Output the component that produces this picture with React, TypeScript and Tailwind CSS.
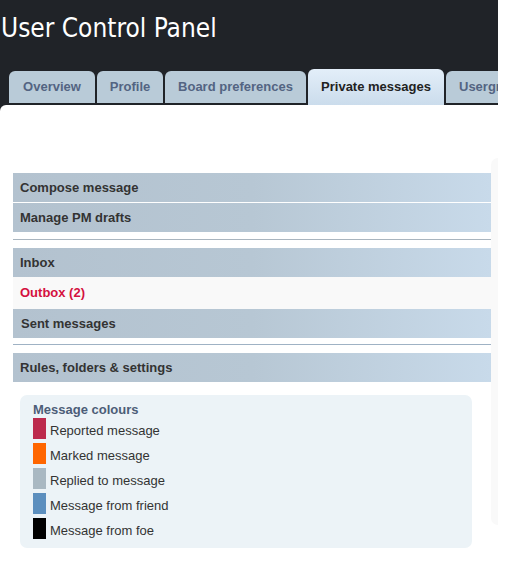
import React from 'react';

const tabs = [
  { label: 'Overview', width: 'w-[86px]' },
  { label: 'Profile', width: 'w-[66px]' },
  { label: 'Board preferences', width: 'w-[141px]' },
  { label: 'Private messages', width: 'w-[136px]', active: true },
];

const legend = [
  { label: 'Reported message', color: 'bg-[#bc2a4d]' },
  { label: 'Marked message', color: 'bg-[#ff6600]' },
  { label: 'Replied to message', color: 'bg-[#a9b8c2]' },
  { label: 'Message from friend', color: 'bg-[#5c8fbe]' },
  { label: 'Message from foe', color: 'bg-[#000000]' },
];

const MenuRow: React.FC<{ label: string }> = ({ label }) => (
  <div className="h-[29px] flex items-center pl-[7px] bg-gradient-to-r from-[#b3c2cf] via-[#b7c7d4] to-[#c8daea] text-[13px] font-bold text-[#333333]">
    {label}
  </div>
);

const App: React.FC = () => {
  return (
    <div className="min-h-[562px] bg-white font-['Liberation_Sans',Arial,sans-serif]">
      <div className="w-[498px] overflow-hidden bg-[#202328]">
        <h1 className="pt-[13px] pl-[1px] text-[26px] leading-[30px] font-normal text-white font-['DejaVu_Sans_Condensed','DejaVu_Sans',sans-serif]">
          User Control Panel
        </h1>

        <div className="mt-[26px] flex items-end gap-[2px] pl-[9px] h-[36px]">
          {tabs.map((tab) =>
            tab.active ? (
              <div
                key={tab.label}
                className={`${tab.width} shrink-0 h-[36px] rounded-t-[6px] bg-gradient-to-b from-[#e3eef9] to-[#cbdcec] flex items-center justify-center text-[13px] font-bold text-[#222222]`}
              >
                {tab.label}
              </div>
            ) : (
              <div
                key={tab.label}
                className={`${tab.width} shrink-0 h-[32px] mb-[2px] rounded-t-[6px] bg-[#b9cbd8] flex items-center justify-center text-[13px] font-bold text-[#536482] whitespace-nowrap`}
              >
                {tab.label}
              </div>
            )
          )}
          <div className="w-[110px] shrink-0 h-[32px] mb-[2px] rounded-t-[6px] bg-[#b9cbd8] flex items-center pl-[13px] text-[13px] font-bold text-[#536482] whitespace-nowrap">
            Usergroups
          </div>
        </div>

        <div className="bg-white rounded-tl-[6px] h-[457px] flex">
          <div className="ml-[13px] w-[478px] pt-[68px] flex flex-col">
            <div className="flex flex-col gap-[1px]">
              <MenuRow label="Compose message" />
              <MenuRow label="Manage PM drafts" />
            </div>
            <div className="mt-[7px] mb-[8px] h-[1px] bg-[#a9b5bf]" />

            <MenuRow label="Inbox" />
            <div className="h-[32px] flex items-center pl-[7px] bg-[#f9f9f9] text-[13px] font-bold text-[#d4113f]">
              Outbox (2)
            </div>
            <div className="h-[29px] flex items-center pl-[8px] bg-gradient-to-r from-[#b3c2cf] via-[#b7c7d4] to-[#c8daea] text-[13px] font-bold text-[#333333]">
              Sent messages
            </div>
            <div className="mt-[6px] mb-[8px] h-[1px] bg-[#9fb2c4]" />

            <MenuRow label="Rules, folders & settings" />

            <div className="mt-[13px] ml-[7px] w-[452px] h-[153px] rounded-[7px] bg-[#ecf3f7] pl-[13px] pt-[6px]">
              <div className="text-[13px] leading-[17px] font-bold text-[#4c5d77]">Message colours</div>
              <div className="flex flex-col gap-[4px]">
                {legend.map((item) => (
                  <div key={item.label} className="h-[21px] flex items-start gap-[4px]">
                    <span className={`w-[13px] h-[21px] ${item.color}`} />
                    <span className="pt-[4px] text-[13px] leading-[18px] text-[#333333]">{item.label}</span>
                  </div>
                ))}
              </div>
            </div>
          </div>

          <div className="mt-[53px] w-[7px] h-[367px] rounded-l-[7px] bg-[#f9f9f9]" />
        </div>
      </div>
    </div>
  );
};

export default App;
